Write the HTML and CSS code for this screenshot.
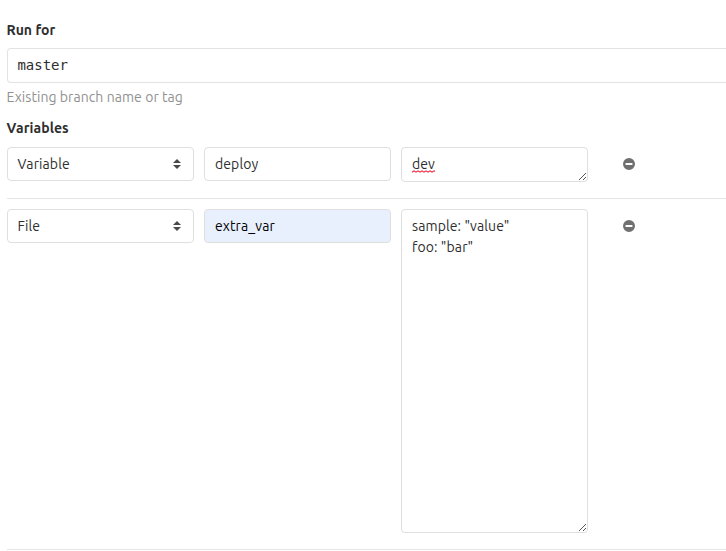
FILE: index.html
```html
<!DOCTYPE html>
<html lang="en">
<head>
<meta charset="utf-8">
<title>Run pipeline</title>
<link rel="stylesheet" href="styles.css">
</head>
<body>
<svg class="defs" width="0" height="0" aria-hidden="true">
  <symbol id="sort" viewBox="0 0 8 10"><path d="M4 0 8 4H0ZM0 6h8L4 10Z"/></symbol>
  <symbol id="grip" viewBox="0 0 8 8" shape-rendering="crispEdges"><path d="M0 7h1v1H0zM1 6h1v1H1zM2 5h1v1H2zM3 4h1v1H3zM4 3h1v1H4zM5 2h1v1H5zM6 1h1v1H6zM4 7h1v1H4zM5 6h1v1H5zM6 5h1v1H6z"/></symbol>
  <symbol id="minus" viewBox="0 0 12 12"><path fill-rule="evenodd" d="M6 0a6 6 0 1 1 0 12A6 6 0 0 1 6 0ZM3 5a.5.5 0 0 0-.5.5v1A.5.5 0 0 0 3 7h6a.5.5 0 0 0 .5-.5v-1A.5.5 0 0 0 9 5Z"/></symbol>
  <symbol id="wave" viewBox="0 0 23 3"><path d="M0 2.2 2 .8 4 2.2 6 .8 8 2.2 10 .8 12 2.2 14 .8 16 2.2 18 .8 20 2.2 22 .8 23 1.5" fill="none" stroke="#f5203c" stroke-width="1.1"/></symbol>
</svg>
<form class="form">
  <div class="label">Run for</div>
  <div class="field ref">master</div>
  <div class="hint">Existing branch name or tag</div>
  <div class="label variables">Variables</div>
  <div class="row">
    <div class="field select">Variable<svg class="sort"><use href="#sort"/></svg></div>
    <div class="field">deploy</div>
    <div class="field area"><span class="misspelled">dev<svg class="wave"><use href="#wave"/></svg></span><svg class="grip"><use href="#grip"/></svg></div>
    <div class="remove"><svg><use href="#minus"/></svg></div>
  </div>
  <div class="row">
    <div class="field select">File<svg class="sort"><use href="#sort"/></svg></div>
    <div class="field autofill">extra_var</div>
    <div class="field area tall">sample: "value"<br>foo: "bar"<svg class="grip"><use href="#grip"/></svg></div>
    <div class="remove"><svg><use href="#minus"/></svg></div>
  </div>
</form>
</body>
</html>
```
FILE: styles.css
```css
* { box-sizing: border-box; }
body {
  margin: 0;
  overflow: hidden;
  background: #fff;
  color: #2e2e2e;
  font: 14px/21px Ubuntu, "Noto Sans", sans-serif;
}
.defs { position: absolute; }
.form { padding: 20px 0 0 7px; }
.label { height: 21px; font-weight: 700; text-indent: -0.4px; }
.variables { margin-top: 10px; letter-spacing: 0.08px; }
.field {
  height: 34px;
  padding: 6px 10px 5px;
  border: 1px solid #dfdfdf;
  border-radius: 4px;
  background: #fff;
  letter-spacing: 0.1px;
  white-space: nowrap;
}
.ref {
  height: 35px;
  margin-top: 7px;
  padding-left: 9.4px;
  border-right: 0;
  border-radius: 4px 0 0 4px;
  border-color: #e3e3e3;
  font-family: "DejaVu Sans Mono", monospace;
  letter-spacing: 0;
}
.hint { height: 21px; margin-top: 4px; color: #919191; letter-spacing: 0.06px; text-indent: -0.4px; }
.row {
  display: grid;
  grid-template-columns: 187px 187px 187px 62px;
  column-gap: 10px;
  align-items: start;
  padding-bottom: 16px;
  border-bottom: 1px solid #e5e5e5;
  margin-top: 8px;
}
.row + .row { margin-top: 10px; }
.select { display: flex; justify-content: space-between; padding-left: 9.6px; }
.sort { width: 8px; height: 10px; margin: 5px 2px 0 0; fill: #4a4a4a; }
.autofill { background: #e8f0fe; color: #000; }
.area { position: relative; height: 35px; }
.tall { height: 324px; }
.grip { position: absolute; right: 0; bottom: 1px; width: 8px; height: 8px; fill: #555; }
.misspelled { position: relative; }
.wave { position: absolute; left: 0; bottom: -1px; width: 23px; height: 3px; }
.remove { display: flex; justify-content: center; padding: 11px 0 0 0.6px; }
.remove svg { width: 12px; height: 12px; fill: #707070; }
```
